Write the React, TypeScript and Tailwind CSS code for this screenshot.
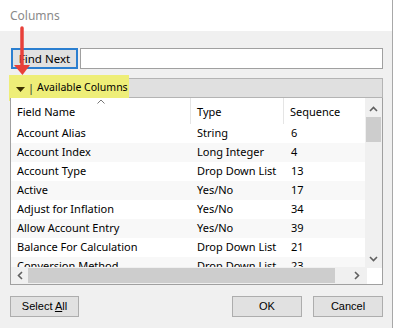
import React from "react";

const rows = [
  ["Account Alias", "String", "6"],
  ["Account Index", "Long Integer", "4"],
  ["Account Type", "Drop Down List", "13"],
  ["Active", "Yes/No", "17"],
  ["Adjust for Inflation", "Yes/No", "34"],
  ["Allow Account Entry", "Yes/No", "39"],
  ["Balance For Calculation", "Drop Down List", "21"],
  ["Conversion Method", "Drop Down List", "23"],
];

const ui = { fontFamily: '"Noto Sans", "Open Sans", sans-serif' };
const btn = { fontFamily: '"Liberation Sans", Arial, sans-serif' };

export default function App() {
  return (
    <div className="relative h-[328px] w-[394px] overflow-hidden bg-white text-[11px] text-black" style={ui}>
      <div className="h-full w-[393px] border-r border-[#a8a8a8] bg-[#f0f0f0]">
        {/* title bar */}
        <div className="flex h-[31px] items-center bg-white pl-[10px] text-[12px] text-[#8a8a8a]">Columns</div>

        <div className="px-[10px] pr-[9px] pt-[17px]">
          {/* find row */}
          <div className="flex h-[21px] gap-[2px]">
            <button
              className="ml-px flex w-[67px] items-center justify-center border-2 border-[#2b7fd0] bg-[#e1e1e1] text-[11.5px]"
              style={ui}
            >
              Find Next
            </button>
            <div className="flex-1 border border-[#a0a0a0] bg-white" />
          </div>

          {/* available columns bar */}
          <div className="relative mt-[9px] h-[20px] border border-[#b4b4b4] bg-[#e0e0e0]">
            <div className="absolute -left-[2px] -top-[4px] h-[26px] w-[120px] bg-[#eeee78]" />
            <div className="relative flex h-full items-center whitespace-nowrap pl-[5px]">
              <svg width="9" height="5" viewBox="0 0 9 5" className="mt-[3px]">
                <path d="M0 0 L9 0 L4.5 5 Z" fill="#3a2f00" />
              </svg>
              <span className="ml-[3px] text-[#333]">|</span>
              <span className="ml-[3px] text-[10.5px] text-black">Available Columns</span>
            </div>
          </div>

          {/* table */}
          <div className="relative h-[187px] overflow-hidden border border-t-0 border-[#a0a0a0] bg-white">
            <div className="flex h-[26px]">
              <div className="relative h-full w-[180px] border-r border-[#e5e5e5] pl-[6px] pt-[6px]">
                Field Name
                <svg width="8" height="5" viewBox="0 0 8 5" className="absolute left-[86px] top-[1px]">
                  <path d="M0.5 4.5 L4 1 L7.5 4.5" fill="none" stroke="#777" strokeWidth="1" />
                </svg>
              </div>
              <div className="h-full w-[93px] border-r border-[#e5e5e5] pl-[6px] pt-[6px]">Type</div>
              <div className="h-full pl-[6px] pt-[6px]">Sequence</div>
            </div>
            <div className="w-[356px]">
              {rows.map(([name, type, seq], i) => (
                <div key={name} className={`flex h-[19px] items-center ${i % 2 ? "bg-[#f8f8f8]" : "bg-white"}`}>
                  <div className="w-[180px] pl-[6px]">{name}</div>
                  <div className="w-[94px] pl-[6px]">{type}</div>
                  <div className="pl-[6px]">{seq}</div>
                </div>
              ))}
            </div>

            {/* vertical scrollbar */}
            <div className="absolute right-0 top-0 flex h-[170px] w-[17px] flex-col items-center bg-[#f0f0f0]">
              <svg width="9" height="6" viewBox="0 0 9 6" className="mt-[8px]">
                <path d="M1 5 L4.5 1.5 L8 5" fill="none" stroke="#606060" strokeWidth="1.6" />
              </svg>
              <div className="mt-[5px] h-[25px] w-[15px] bg-[#cdcdcd]" />
              <div className="flex-1" />
              <svg width="9" height="6" viewBox="0 0 9 6" className="mb-[6px]">
                <path d="M1 1 L4.5 4.5 L8 1" fill="none" stroke="#606060" strokeWidth="1.6" />
              </svg>
            </div>

            {/* horizontal scrollbar */}
            <div className="absolute bottom-0 left-0 flex h-[17px] w-[356px] items-center bg-[#f0f0f0]">
              <svg width="6" height="9" viewBox="0 0 6 9" className="ml-[6px]">
                <path d="M5 1 L1.5 4.5 L5 8" fill="none" stroke="#606060" strokeWidth="1.6" />
              </svg>
              <div className="ml-[5px] h-[15px] w-[307px] bg-[#cdcdcd]" />
              <div className="flex-1" />
              <svg width="6" height="9" viewBox="0 0 6 9" className="mr-[7px]">
                <path d="M1 1 L4.5 4.5 L1 8" fill="none" stroke="#606060" strokeWidth="1.6" />
              </svg>
            </div>
          </div>

          {/* buttons */}
          <div className="mt-[11px] flex h-[21px] items-stretch">
            <button className="w-[69px] border border-[#adadad] bg-[#e1e1e1] text-[11px]" style={btn}>
              Select <span className="underline">A</span>ll
            </button>
            <div className="flex-1" />
            <button className="w-[70px] border border-[#adadad] bg-[#e1e1e1] text-[11px]" style={btn}>
              OK
            </button>
            <button className="ml-[11px] w-[70px] border border-[#adadad] bg-[#e1e1e1] text-[11px]" style={btn}>
              Cancel
            </button>
          </div>
        </div>
      </div>

      {/* red annotation arrow */}
      <svg width="22" height="52" viewBox="0 0 22 52" className="absolute left-[11px] top-[26px]">
        <line x1="11" y1="2" x2="11" y2="40" stroke="#e8403a" strokeWidth="3.5" strokeLinecap="round" />
        <path d="M3 39 L19 39 L11.5 49 Z" fill="#e8403a" />
      </svg>
    </div>
  );
}
